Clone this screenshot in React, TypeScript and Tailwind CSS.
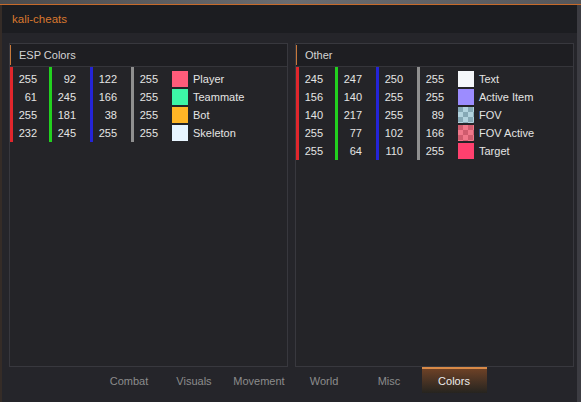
import React from 'react';

type Row = { r: number; g: number; b: number; a: number; label: string; swatch: string };

const espRows: Row[] = [
  { r: 255, g: 92, b: 122, a: 255, label: 'Player', swatch: 'bg-[#ff5c7a]' },
  { r: 61, g: 245, b: 166, a: 255, label: 'Teammate', swatch: 'bg-[#3df5a6]' },
  { r: 255, g: 181, b: 38, a: 255, label: 'Bot', swatch: 'bg-[#ffb526]' },
  { r: 232, g: 245, b: 255, a: 255, label: 'Skeleton', swatch: 'bg-[#e8f5ff]' },
];

const otherRows: Row[] = [
  { r: 245, g: 247, b: 250, a: 255, label: 'Text', swatch: 'bg-[#f5f7fa]' },
  { r: 156, g: 140, b: 255, a: 255, label: 'Active Item', swatch: 'bg-[#9c8cff]' },
  {
    r: 140, g: 217, b: 255, a: 89, label: 'FOV',
    swatch: 'bg-[repeating-conic-gradient(#b2d3de_0%_25%,#86a9b6_0%_50%)] bg-[length:10px_10px]',
  },
  {
    r: 255, g: 77, b: 102, a: 166, label: 'FOV Active',
    swatch: 'bg-[repeating-conic-gradient(#f0788a_0%_25%,#cf5c6e_0%_50%)] bg-[length:10px_10px]',
  },
  { r: 255, g: 64, b: 110, a: 255, label: 'Target', swatch: 'bg-[#ff406e]' },
];

const tabs = ['Combat', 'Visuals', 'Movement', 'World', 'Misc', 'Colors'];

function Channel({ values, bar, width }: { values: number[]; bar: string; width: string }) {
  return (
    <div className={`flex ${width}`}>
      <div className={`w-[3px] ${bar}`} />
      <div className="w-[24px] pt-[3px] text-right">
        {values.map((v, i) => (
          <div key={i} className="h-[18px] leading-[18px]">{v}</div>
        ))}
      </div>
    </div>
  );
}

function Panel({ title, rows }: { title: string; rows: Row[] }) {
  return (
    <div className="w-[279px] h-full border border-[#38383e] bg-[#242428] flex flex-col">
      <div className="h-[23px] bg-[#1e1e22] border-b border-[#35353a] flex items-stretch">
        <div className="w-px bg-[#c8783a] my-px" />
        <span className="pl-2 flex items-center text-[11px] text-[#d4d4d4]">{title}</span>
      </div>
      <div className="flex text-[11px] text-[#e4e4e4]">
        <Channel values={rows.map((r) => r.r)} bar="bg-[#e0262c]" width="w-[39px]" />
        <Channel values={rows.map((r) => r.g)} bar="bg-[#22d11f]" width="w-[41px]" />
        <Channel values={rows.map((r) => r.b)} bar="bg-[#2424d8]" width="w-[41px]" />
        <Channel values={rows.map((r) => r.a)} bar="bg-[#8f8f8f]" width="w-[41px]" />
        <div className="pt-[3px]">
          {rows.map((r) => (
            <div key={r.label} className="h-[18px] flex items-center">
              <div className={`w-[16px] h-[16px] ${r.swatch}`} />
              <span className="pl-[5px] leading-[18px]">{r.label}</span>
            </div>
          ))}
        </div>
      </div>
    </div>
  );
}

export default function App() {
  return (
    <div className="w-[581px] h-[402px] flex flex-col bg-[#25252a] font-['Liberation_Sans',sans-serif] overflow-hidden">
      <div className="h-[4px] bg-gradient-to-r from-[#4a4a4c] via-[#6a6c70] to-[#55565a]" />
      <div className="h-px bg-[#c76a2a]" />
      <div className="flex flex-1 border-l-2 border-[#352c27] border-r-4 border-r-[#3c3c42]">
        <div className="flex-1 flex flex-col">
          <div className="h-[28px] bg-[#1c1d21] flex items-center pl-[10px] pt-px text-[11.5px] text-[#d9782f]">
            kali-cheats
          </div>
          <div className="flex-1 flex flex-col pt-[10px] pl-[7px]">
            <div className="flex gap-[7px] h-[324px]">
              <Panel title="ESP Colors" rows={espRows} />
              <Panel title="Other" rows={otherRows} />
            </div>
            <div className="flex justify-center pr-[7px] mr-[-4px]">
              {tabs.map((t) =>
                t === 'Colors' ? (
                  <div
                    key={t}
                    className="w-[65px] h-[26px] border-t-2 border-[#d88a48] bg-gradient-to-b from-[#6d4126] to-[#26241f] flex items-center justify-center pt-px text-[11px] text-[#ececec]"
                  >
                    {t}
                  </div>
                ) : (
                  <div key={t} className="w-[65px] h-[26px] flex items-center justify-center pt-[3px] text-[11px] text-[#8c8c8c]">
                    {t}
                  </div>
                )
              )}
            </div>
          </div>
        </div>
      </div>
    </div>
  );
}
